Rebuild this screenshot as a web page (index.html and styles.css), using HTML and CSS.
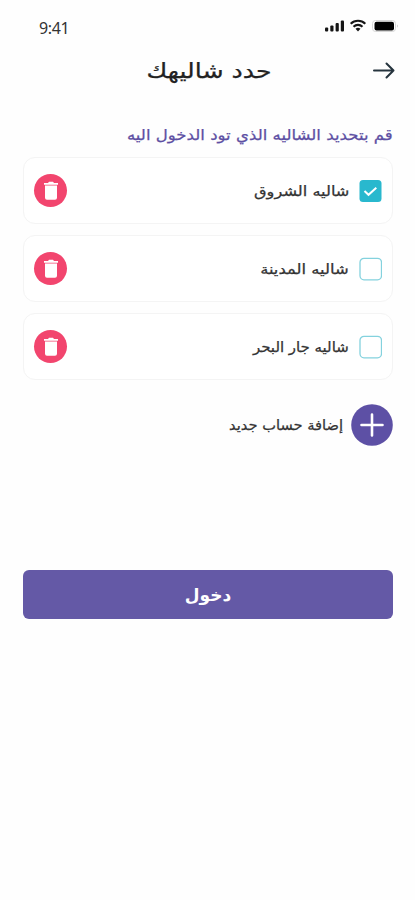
FILE: index.html
```
<!DOCTYPE html>
<html lang="ar" dir="rtl">
<head>
<meta charset="utf-8">
<meta name="viewport" content="width=device-width, initial-scale=1">
<title>حدد شاليهك</title>
<link rel="stylesheet" href="styles.css">
</head>
<body>
<div class="status" dir="ltr">
  <span class="time">9:41</span>
  <svg class="indicators" width="76" height="16" viewBox="0 0 76 16">
    <g fill="#151515">
      <rect x="1" y="9.500" width="3.2" height="4" rx="1"/>
      <rect x="6.3" y="7.500" width="3.2" height="6" rx="1"/>
      <rect x="11.6" y="5" width="3.2" height="8.500" rx="1"/>
      <rect x="16.800" y="2.500" width="3.200" height="11" rx="1"/>
    </g>
    <g fill="none" stroke="#151515" stroke-width="2.100">
      <path d="M26.700 5.700a10.500 10.500 0 0 1 14.600 0"/>
      <path d="M29.500 8.700a6.500 6.500 0 0 1 9 0"/>
    </g>
    <path d="M31.500 10.800a3.900 3.900 0 0 1 5 0L34 13.500z" fill="#151515"/>
    <rect x="48.500" y="2.500" width="23" height="11" rx="3" fill="#fff" stroke="#d6d6d6"/>
    <rect x="50.500" y="3.700" width="19.500" height="8.800" rx="2" fill="#000"/>
    <path d="M73 6.200q1.600 1.800 0 3.600z" fill="#bbb"/>
  </svg>
</div>
<header class="bar">
  <svg class="arrow" width="22" height="18" viewBox="0 0 22 18" fill="none" stroke="#26343e" stroke-width="2" stroke-linecap="round" stroke-linejoin="round"><path d="M1 8.500h19.500M13.500 1.500L20.500 8.500 13.500 15.500"/></svg>
  <h1 class="title"><span class="title-text">حدد شاليهك</span></h1>
</header>
<main class="content">
  <p class="hint"><span class="hint-text">قم بتحديد الشاليه الذي تود الدخول اليه</span></p>
  <ul class="list">
    <li class="card">
      <svg class="check" width="24" height="24" viewBox="0 0 24 24"><rect x="1.500" y="1" width="22" height="22" rx="3.500" fill="#29b8ce"/><path d="M6.500 12l4 3.800 7.800-7" fill="none" stroke="#fff" stroke-width="2"/></svg>
      <span class="name name-1">شاليه الشروق</span>
      <button class="delete" aria-label="حذف"><svg width="16" height="20" viewBox="0 0 16 20" fill="#fff"><path d="M1 2h4L6 .8h4L11 2h4v1.700H1zM2 4.600h12v12.200q0 2-2 2H4q-2 0-2-2z"/></svg></button>
    </li>
    <li class="card">
      <svg class="check" width="24" height="24" viewBox="0 0 24 24"><rect x="2" y="1.300" width="21.500" height="21.500" rx="4" fill="#fff" stroke="#84d2de" stroke-width="1.300"/></svg>
      <span class="name name-2">شاليه المدينة</span>
      <button class="delete" aria-label="حذف"><svg width="16" height="20" viewBox="0 0 16 20" fill="#fff"><path d="M1 2h4L6 .8h4L11 2h4v1.700H1zM2 4.600h12v12.200q0 2-2 2H4q-2 0-2-2z"/></svg></button>
    </li>
    <li class="card">
      <svg class="check" width="24" height="24" viewBox="0 0 24 24"><rect x="2" y="1.300" width="21.500" height="21.500" rx="4" fill="#fff" stroke="#84d2de" stroke-width="1.300"/></svg>
      <span class="name name-3">شاليه جار البحر</span>
      <button class="delete" aria-label="حذف"><svg width="16" height="20" viewBox="0 0 16 20" fill="#fff"><path d="M1 2h4L6 .8h4L11 2h4v1.700H1zM2 4.600h12v12.200q0 2-2 2H4q-2 0-2-2z"/></svg></button>
    </li>
  </ul>
  <div class="add">
    <svg width="42" height="42" viewBox="0 0 42 42"><circle cx="21" cy="21" r="20.800" fill="#5d50a5"/><path d="M10.500 21h21M21 10.500v21" stroke="#fff" stroke-width="2.600" stroke-linecap="round"/></svg>
    <span class="add-text">إضافة حساب جديد</span>
  </div>
  <button class="submit"><span class="submit-text">دخول</span></button>
</main>
</body>
</html>
```
FILE: styles.css
```
* { box-sizing: border-box; }
body {
  margin: 0;
  min-height: 900px;
  background: #fefefe;
  color: #333;
  font-family: "DejaVu Sans", sans-serif;
}
.status {
  height: 42px;
  padding: 13px 15px 0 39px;
  display: flex;
  justify-content: space-between;
  align-items: flex-start;
}
.time {
  font: 16px/30px "Noto Sans", sans-serif;
  letter-spacing: -0.4px;
  color: #333;
}
.indicators { margin-top: 5px; }
.bar {
  height: 56px;
  padding: 0 20px;
  display: grid;
  grid-template-columns: 22px 1fr 22px;
  align-items: center;
}
.title {
  margin: 0;
  padding-left: 3px;
  text-align: center;
  font-size: 21px;
  font-weight: 400;
  line-height: 58px;
  color: #222;
}
.content { padding: 19px 22px 0 23px; }
.hint {
  margin: 0;
  height: 40px;
  line-height: 36px;
  font-size: 15px;
  color: #5d4fa3;
  white-space: nowrap;
}
.list {
  margin: 0;
  padding: 0;
  list-style: none;
  display: grid;
  gap: 11px;
}
.card {
  height: 67px;
  padding: 0 10px;
  border: 1px solid #f4f4f4;
  border-radius: 12px;
  background: #fff;
  display: flex;
  align-items: center;
}
.name {
  margin-right: 9px;
  font-size: 14px;
  white-space: nowrap;
}
.delete {
  width: 33px;
  height: 33px;
  margin-right: auto;
  padding: 0;
  border: 0;
  border-radius: 50%;
  background: #f2456e;
  display: grid;
  place-items: center;
}
.add {
  margin-top: 24px;
  height: 42px;
  display: flex;
  align-items: center;
  gap: 8px;
  font-size: 14px;
}
.submit {
  display: block;
  width: 100%;
  height: 49px;
  margin-top: 124px;
  padding: 0;
  border: 0;
  border-radius: 6px;
  background: #6459a6;
  color: #fff;
  font: bold 17px "DejaVu Sans", sans-serif;
}
.title-text, .hint-text, .name, .add-text, .submit-text {
  display: inline-block;
  transform-origin: right center;
  -webkit-text-stroke: 0.25px currentColor;
}
.title-text { transform-origin: center; transform: scaleX(1.2); }
.hint-text { transform: scaleX(1.104); }
.name-1 { transform: scaleX(1.157); }
.name-2 { transform: scaleX(1.17); }
.name-3 { transform: scaleX(1.067); }
.add-text { transform: scaleX(1.046); }
.submit-text { -webkit-text-stroke: 0; }
```
